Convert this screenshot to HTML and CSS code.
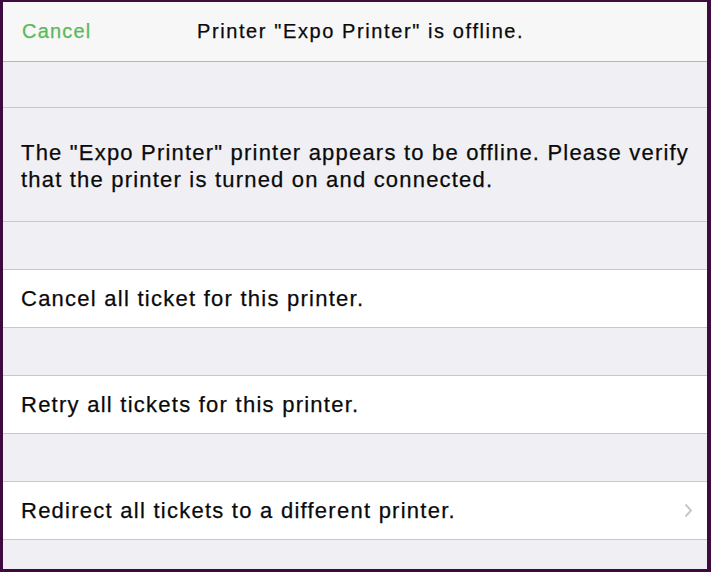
FILE: index.html
```html
<!DOCTYPE html>
<html lang="en">
<head>
    <meta charset="UTF-8">
    <meta name="viewport" content="width=device-width, initial-scale=1.0">
    <title>Printer offline</title>
    <link rel="stylesheet" href="styles.css">
</head>
<body>
    <div id="screen">
        <div class="navbar">
            <a class="nav-cancel">Cancel</a>
            <h1 class="nav-title">Printer "Expo Printer" is offline.</h1>
        </div>
        <div class="spacer first"></div>
        <p class="message">The "Expo Printer" printer appears to be offline. Please verify that the printer is turned on and connected.</p>
        <div class="spacer"></div>
        <div class="row">Cancel all ticket for this printer.</div>
        <div class="spacer"></div>
        <div class="row">Retry all tickets for this printer.</div>
        <div class="spacer"></div>
        <div class="row">
            <span>Redirect all tickets to a different printer.</span>
            <svg class="chevron" width="9" height="15" viewBox="0 0 9 15">
                <path d="M1.5 1.5 L7 7.5 L1.5 13.5" fill="none" stroke="#c7c7cc" stroke-width="2"/>
            </svg>
        </div>
        <div class="rest"></div>
    </div>
</body>
</html>
```

FILE: styles.css
```css
html, body {
    height: 100%;
}

body {
    margin: 0;
    padding: 2px 4px 3px 3px;
    box-sizing: border-box;
    background-color: #3d0b3e;
    font-family: "Liberation Sans", Arial, sans-serif;
    color: #0a0a0a;
    -webkit-text-stroke: 0.25px currentColor;
}

#screen {
    height: 100%;
    display: flex;
    flex-direction: column;
    background-color: #efeff4;
}

.navbar {
    height: 59px;
    display: flex;
    align-items: center;
    background-color: #f7f7f7;
    border-bottom: 1px solid #b5b5b8;
    flex-shrink: 0;
}

.nav-cancel {
    color: #5cb85c;
    font-size: 20px;
    letter-spacing: 1.2px;
    padding-left: 19px;
    width: 175px;
}

.nav-title {
    margin: 0;
    font-size: 20px;
    letter-spacing: 1.6px;
    font-weight: normal;
}

.spacer {
    height: 47px;
    border-bottom: 1px solid #c8c7cc;
    flex-shrink: 0;
}

.spacer.first {
    height: 45px;
}

.message {
    margin: 0;
    height: 114px;
    box-sizing: border-box;
    padding: 31px 4px 0 18px;
    font-size: 22px;
    letter-spacing: 1.2px;
    line-height: 27px;
    border-bottom: 1px solid #c8c7cc;
    flex-shrink: 0;
}

.row {
    height: 57px;
    display: flex;
    align-items: center;
    justify-content: space-between;
    padding: 0 14px 0 18px;
    background-color: #fff;
    font-size: 22px;
    letter-spacing: 1.25px;
    border-bottom: 1px solid #c8c7cc;
    flex-shrink: 0;
}

.chevron {
    display: block;
}

.rest {
    flex: 1;
}
```
